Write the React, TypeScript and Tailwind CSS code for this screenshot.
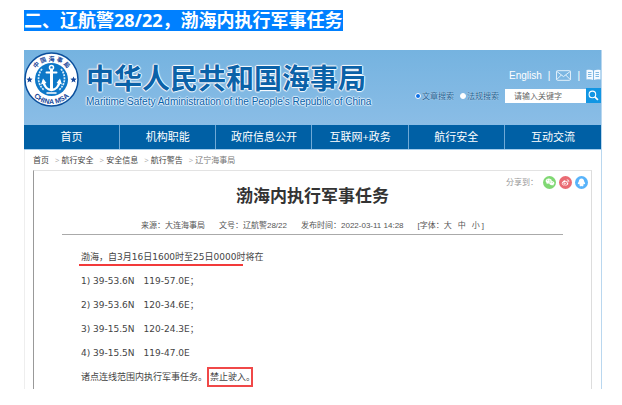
import { useState } from "react";
import { AiFillWechat, AiOutlineWeibo } from "react-icons/ai";

const navItems = ["首页", "机构职能", "政府信息公开", "互联网+政务", "航行安全", "互动交流"];

const crumbs = ["首页", "航行安全", "安全信息", "航行警告", "辽宁海事局"];

const points = [
  "1) 39-53.6N\u2003119-57.0E；",
  "2) 39-53.6N\u2003120-34.6E；",
  "3) 39-15.5N\u2003120-24.3E；",
  "4) 39-15.5N\u2003119-47.0E",
];

function Emblem() {
  return (
    <svg viewBox="0 0 110 110" className="size-[55px] shrink-0" role="img" aria-label="China MSA">
      <defs>
        <path id="arcTop" d="M17 55a38 38 0 0 1 76 0" />
        <path id="arcBottom" d="M6 55a49 49 0 0 0 98 0" />
      </defs>
      <circle cx="55" cy="55" r="53" fill="#fff" stroke="#0b4f9c" strokeWidth="3" />
      <circle cx="55" cy="55" r="33" fill="#0d78c8" />
      <g fill="#17479a" fontFamily='"Liberation Sans", "Noto Sans CJK SC", sans-serif' textAnchor="middle" fontWeight="700">
        <text fontSize="12">
          <textPath href="#arcTop" startOffset="50%">中 国 海 事 局</textPath>
        </text>
        <text fontSize="14">
          <textPath href="#arcBottom" startOffset="50%">CHINA MSA</textPath>
        </text>
      </g>
      <g fill="#17479a">
        <path d="M11 49l1.800 4.200 4.500.3-3.500 2.900 1.200 4.500-4-2.500-4 2.500 1.200-4.500-3.500-2.900 4.500-.3z" />
        <path d="M99 49l1.800 4.200 4.500.3-3.500 2.900 1.200 4.500-4-2.500-4 2.500 1.200-4.500-3.500-2.900 4.500-.3z" />
      </g>
      <g fill="none" stroke="#d8ecfa" strokeWidth="3.500" strokeDasharray="4 2">
        <path d="M36 34c-10 12-10 31 5 43" />
        <path d="M74 34c10 12 10 31-5 43" />
      </g>
      <g fill="none" stroke="#fff" strokeLinecap="round">
        <circle cx="55" cy="31" r="4" strokeWidth="3" />
        <path d="M45 41h20" strokeWidth="4" />
        <path d="M55 36v38" strokeWidth="6" />
        <path d="M39 59c1 10 8 16 16 17 8-1 15-7 16-17" strokeWidth="5" />
        <path d="M46 82h18" strokeWidth="3" />
      </g>
      <path d="M34 65l4-12 7 9zM76 65l-4-12-7 9z" fill="#fff" />
    </svg>
  );
}

function MailIcon() {
  return (
    <svg viewBox="0 0 28 20" className="w-[15px] h-[11px]" fill="none" stroke="#e6f3fc" strokeWidth="1.800">
      <rect x="1" y="1" width="26" height="18" rx="2" />
      <path d="M1 2l13 10L27 2M1 18l9-9M27 18l-9-9" />
    </svg>
  );
}

function BookIcon() {
  return (
    <svg viewBox="0 0 30 24" className="w-[15px] h-3">
      <path d="M1 2c5-1 10-1 13 1v19c-3-2-8-2-13-1zM29 2c-5-1-10-1-13 1v19c3-2 8-2 13-1z" fill="#f2f9ff" />
      <path d="M4 7h7M4 11h7M4 15h7M19 7h7M19 11h7M19 15h7" stroke="#6fb0df" strokeWidth="1.800" />
    </svg>
  );
}

export default function App() {
  const [scope, setScope] = useState("article");
  const [keyword, setKeyword] = useState("");

  return (
    <main className="bg-white pl-6 pr-5 pt-[10px] pb-4 font-['Open_Sans','Noto_Sans_CJK_SC',sans-serif]">
      <h2 className="text-[18px] leading-[21px] font-bold text-white mb-[19px]">
        <span className="inline-block bg-[#0080ff] whitespace-nowrap">二、辽航警28/22，渤海内执行军事任务</span>
      </h2>

      <div className="border-r border-r-[#b9d7ef]">
        {/* Banner */}
        <header className="h-[75px] flex items-start justify-between bg-linear-to-b from-[#75b3e0] to-[#8abde6]">
          <div className="flex items-start pt-[2px]">
            <Emblem />
            <div className="pl-[7px] pt-3 text-[#0b62a8] whitespace-nowrap">
              <h1 className="text-[28px] leading-7 font-bold [text-shadow:1px_0_1px_#fff,-1px_0_1px_#fff,0_1px_1px_#fff,0_-1px_1px_#fff]">
                中华人民共和国海事局
              </h1>
              <p className="mt-1 text-[10px] leading-3 font-['Liberation_Sans',sans-serif] [text-shadow:1px_0_1px_#e8f4ff,-1px_0_1px_#e8f4ff,0_1px_1px_#e8f4ff,0_-1px_1px_#e8f4ff]">
                Maritime Safety Administration of the People's Republic of China
              </p>
            </div>
          </div>

          <div className="flex flex-col items-end gap-[6px] pt-[18px] whitespace-nowrap">
            <div className="flex items-center gap-[6px] h-[14px] text-[10px] text-white font-['Liberation_Sans',sans-serif]">
              <a href="#english">English</a>
              <span>|</span>
              <a href="#mail" aria-label="邮箱"><MailIcon /></a>
              <span>|</span>
              <a href="#guide" aria-label="办事指南"><BookIcon /></a>
            </div>
            <form className="flex items-center text-[8px] leading-[14px]" onSubmit={(e) => e.preventDefault()}>
              <label className="flex items-center gap-px mr-[6px] text-[#145a8e] [text-shadow:0_0_1px_#fff]">
                <input
                  type="radio"
                  name="scope"
                  checked={scope === "article"}
                  onChange={() => setScope("article")}
                  className="appearance-none size-[6px] rounded-full bg-white checked:bg-[#0b6fe8] border border-white"
                />
                文章搜索
              </label>
              <label className="flex items-center gap-px mr-[6px] text-[#145a8e] [text-shadow:0_0_1px_#fff]">
                <input
                  type="radio"
                  name="scope"
                  checked={scope === "law"}
                  onChange={() => setScope("law")}
                  className="appearance-none size-[6px] rounded-full bg-white checked:bg-[#0b6fe8] border border-white"
                />
                法规搜索
              </label>
              <input
                type="text"
                aria-label="关键字"
                placeholder="请输入关键字"
                value={keyword}
                onChange={(e) => setKeyword(e.target.value)}
                className="w-[81px] h-[14px] bg-white pl-[9px] text-[8px] text-[#555] placeholder:text-[#666] outline-none"
              />
              <button type="submit" aria-label="搜索" className="size-[15px] flex items-center justify-center bg-[#1296e3]">
                <svg viewBox="0 0 20 20" className="size-[11px]" fill="none" stroke="#fff" strokeWidth="2">
                  <circle cx="8" cy="8" r="6" />
                  <path d="M12.500 12.500L18 18" strokeWidth="3" />
                </svg>
              </button>
            </form>
          </div>
        </header>

        {/* Main nav */}
        <nav className="grid grid-cols-6 h-[25px] bg-[#0060a5] border-b border-b-[#a5cdec] divide-x divide-[#6fa9d6]">
          {navItems.map((item) => (
            <a key={item} href="#nav" className="flex items-center justify-center text-[11px] leading-4 text-white whitespace-nowrap">
              {item}
            </a>
          ))}
        </nav>

        <div className="border-l border-l-[#eeeeee] pl-2 pr-[9px]">
          {/* Breadcrumb */}
          <div className="flex items-center gap-[6px] h-5 text-[8px] text-[#444]">
            {crumbs.map((crumb, i) => (
              <span key={crumb} className="flex items-center gap-[2px]">
                {i > 0 && <span className="text-[#aaa]">&gt;</span>}
                {i < crumbs.length - 1 ? <a href="#crumb">{crumb}</a> : <span className="text-[#777]">{crumb}</span>}
              </span>
            ))}
          </div>

          {/* Article */}
          <article className="border-t border-t-[#e3e3e3] border-l border-l-[#999] border-r border-r-[#ddd]">
            <div className="flex items-center justify-end h-[22px] pr-[3px] text-[8px] text-[#999]">
              <span className="mr-[5px]">分享到：</span>
              <div className="flex gap-[3px]">
                <a href="#wechat" aria-label="微信" className="size-[13px] rounded-full bg-[#80d873] text-white flex items-center justify-center">
                  <AiFillWechat size={10} />
                </a>
                <a href="#weibo" aria-label="微博" className="size-[13px] rounded-full bg-[#ea6b73] text-white flex items-center justify-center">
                  <AiOutlineWeibo size={9} />
                </a>
                <a href="#qq" aria-label="QQ" className="size-[13px] rounded-full bg-[#58b3fa] flex items-center justify-center">
                  <svg viewBox="0 0 20 20" className="size-[9px]" fill="#fff">
                    <path d="M10 1c-4 0-6 3-6 7-2 3-3 6-1 6l2-1 1 3c-1 2 1 3 4 2 3 1 5 0 4-2l1-3 2 1c2 0 1-3-1-6 0-4-2-7-6-7z" />
                  </svg>
                </a>
              </div>
            </div>

            <div className="mx-7">
              <h3 className="-mt-[9px] text-center text-[17px] leading-6 font-bold text-[#333]">渤海内执行军事任务</h3>
              <div className="flex justify-center gap-[14px] mt-2 pt-1 pb-[2px] text-[8px] leading-3 text-[#555] whitespace-nowrap border-b border-b-[#aaa] font-['Liberation_Sans','Noto_Sans_CJK_SC',sans-serif]">
                <span>来源：大连海事局</span>
                <span>文号：辽航警28/22</span>
                <span>发布时间：2022-03-11 14:28</span>
                <span className="flex">
                  [字体：
                  <button className="mr-[6px]">大</button>
                  <button className="mr-[6px]">中</button>
                  <button className="mr-[2px]">小</button>]
                </span>
              </div>
            </div>

            <div className="pl-[47px] pt-[10px] text-[9px] leading-6 text-[#444] whitespace-nowrap font-['DejaVu_Sans','Noto_Sans_CJK_SC',sans-serif]">
              <p className="relative">
                渤海，自3月16日1600时至25日0000时将在
                <span className="absolute -left-[2px] top-[19px] w-[164px] h-[2px] bg-[#f23a3a]" />
              </p>
              {points.map((point) => (
                <p key={point}>{point}</p>
              ))}
              <p className="flex items-center">
                诸点连线范围内执行军事任务。
                <span className="border-2 border-[#f04848] leading-4 w-[46px] pl-px">禁止驶入。</span>
              </p>
            </div>
          </article>
        </div>
      </div>
    </main>
  );
}
